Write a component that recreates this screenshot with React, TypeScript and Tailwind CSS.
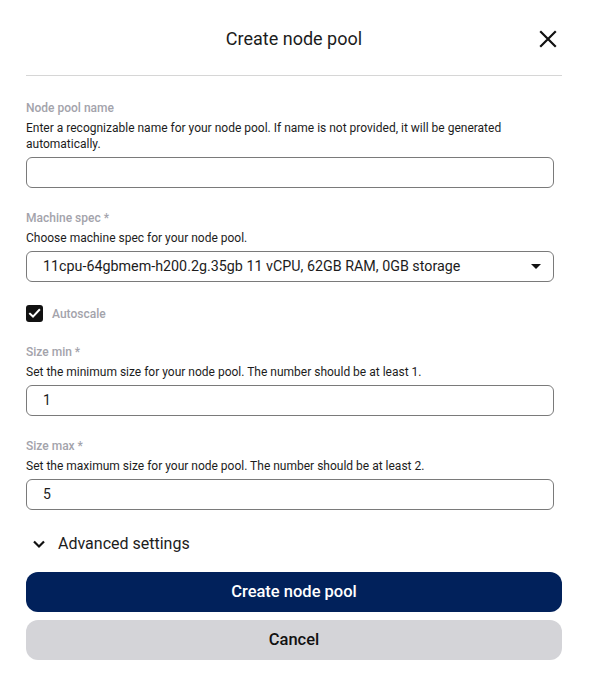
import React from "react";

const font = { fontFamily: "Roboto, 'Noto Sans', sans-serif" };

function Field({ label, desc, children }: { label: string; desc: React.ReactNode; children: React.ReactNode }) {
  return (
    <div className="flex flex-col">
      <div className="text-[12px] leading-4 font-medium text-[#a3a3ab]">{label}</div>
      <div className="mt-1 text-[12px] leading-4 text-[#1c1c1c]">{desc}</div>
      <div className="mt-[5px]">{children}</div>
    </div>
  );
}

function TextBox({ value }: { value?: string }) {
  return (
    <div className="h-[31px] w-[528px] rounded-[6px] border border-[#7a7a7a] flex items-center px-4 text-[14px] text-[#1c1c1c]">
      {value}
    </div>
  );
}

export default function App() {
  return (
    <div style={font} className="w-[593px] h-[682px] bg-white pl-[26px] pr-[31px]">
      <div className="grid grid-cols-[1fr_auto_1fr] items-center h-[76px] pt-[2px] border-b border-[#d6d6d6]">
        <div />
        <div className="text-[18px] text-[#1c1c1c]">Create node pool</div>
        <div className="flex justify-end pr-[4px]">
          <svg width="20" height="20" viewBox="0 0 20 20" fill="none" stroke="#111" strokeWidth="2.2" strokeLinecap="square">
            <path d="M3 3L17 17M17 3L3 17" />
          </svg>
        </div>
      </div>

      <div className="flex flex-col gap-[22px] mt-[24px]">
        <Field
          label="Node pool name"
          desc={<>Enter a recognizable name for your node pool. If name is not provided, it will be generated<br />automatically.</>}
        >
          <TextBox />
        </Field>

        <Field label="Machine spec *" desc="Choose machine spec for your node pool.">
          <div className="h-[31px] w-[528px] rounded-[6px] border border-[#7a7a7a] flex items-center justify-between pl-4 pr-[12px] text-[14.3px] text-[#1c1c1c]">
            <span>11cpu-64gbmem-h200.2g.35gb 11 vCPU, 62GB RAM, 0GB storage</span>
            <svg width="10" height="5" viewBox="0 0 10 5"><path d="M0 0H10L5 5Z" fill="#111" /></svg>
          </div>
        </Field>

        <div className="flex items-center gap-[9px] h-[17px] mt-[1px]">
          <div className="w-[17px] h-[17px] rounded-[3px] bg-[#111] flex items-center justify-center">
            <svg width="15" height="15" viewBox="0 0 15 15" fill="none" stroke="white" strokeWidth="2" strokeLinecap="square">
              <path d="M3 7.8L6 10.6L12.2 4" />
            </svg>
          </div>
          <span className="text-[12px] font-medium text-[#a3a3ab]">Autoscale</span>
        </div>

        <Field label="Size min *" desc="Set the minimum size for your node pool. The number should be at least 1.">
          <TextBox value="1" />
        </Field>

        <Field label="Size max *" desc="Set the maximum size for your node pool. The number should be at least 2.">
          <TextBox value="5" />
        </Field>

        <div className="flex items-center h-6 pl-[6px] gap-[12px]">
          <svg width="14" height="14" viewBox="0 0 14 14" fill="none" stroke="#111" strokeWidth="2.2">
            <path d="M2 4.5L7 9.5L12 4.5" />
          </svg>
          <span className="text-[16px] text-[#1c1c1c]">Advanced settings</span>
        </div>
      </div>

      <div className="flex flex-col gap-2 mt-4">
        <button className="h-[40px] w-full rounded-[12px] bg-[#01215b] text-white text-[16.5px] font-medium">Create node pool</button>
        <button className="h-[40px] w-full rounded-[12px] bg-[#d4d4d8] text-[#111] text-[16.5px] font-medium">Cancel</button>
      </div>
    </div>
  );
}
